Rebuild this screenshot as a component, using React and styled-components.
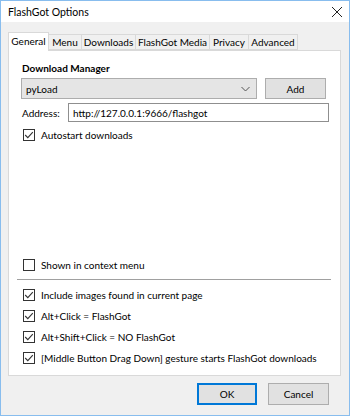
import styled, { createGlobalStyle } from 'styled-components'

const GlobalStyle = createGlobalStyle`
  html, body {
    margin: 0;
    padding: 0;
    background: #f0f0f0;
  }
  body {
    font-family: Lato, "Noto Sans", sans-serif;
    font-size: 10px;
    color: #000;
  }
`

const Window = styled.div`
  box-sizing: border-box;
  width: 350px;
  height: 416px;
  border: 1px solid #88bdee;
  background: #f0f0f0;
  display: flex;
  flex-direction: column;
`

const TitleBar = styled.div`
  height: 21px;
  background: #fff;
  display: flex;
  align-items: center;
  justify-content: space-between;
  padding: 0 6px 0 7px;
  font-size: 10.5px;
`

const Body = styled.div`
  padding: 10px 8px 0 7px;
  display: flex;
  flex-direction: column;
`

const Tabs = styled.div`
  display: flex;
  align-items: flex-end;
  height: 18px;
  position: relative;
  z-index: 1;
`

const Tab = styled.div`
  box-sizing: border-box;
  width: ${({w}) => w}px;
  height: ${({active}) => active ? '19px' : '16px'};
  margin-bottom: ${({active}) => active ? '-1px' : '0'};
  border: 1px solid #d9d9d9;
  border-bottom: ${({active}) => active ? 'none' : '1px solid #d9d9d9'};
  border-left: ${({first, active}) => (first || active) ? '1px solid #d9d9d9' : 'none'};
  background: ${({active}) => active ? '#fff' : '#f0f0f0'};
  display: flex;
  align-items: center;
  justify-content: center;
  white-space: nowrap;
  padding-bottom: ${({active}) => active ? '3px' : '0'};
`

const Panel = styled.div`
  box-sizing: border-box;
  height: 326px;
  background: #fff;
  border: 1px solid #d9d9d9;
  padding: 9px 11px 9px 12px;
  display: flex;
  flex-direction: column;
`

const Heading = styled.div`
  font-weight: bold;
  line-height: 16px;
  padding-left: 1px;
`

const Row = styled.div`
  display: flex;
  align-items: center;
  margin-top: ${({mt}) => mt || 0}px;
`

const Select = styled.div`
  box-sizing: border-box;
  width: 236px;
  height: 21px;
  background: #e5e5e5;
  border: 1px solid #adadad;
  display: flex;
  align-items: center;
  justify-content: space-between;
  padding: 0 6px 0 4px;
`

const Button = styled.div`
  box-sizing: border-box;
  width: ${({w}) => w || 61}px;
  height: ${({h}) => h || 21}px;
  background: #e1e1e1;
  border: ${({primary}) => primary ? '2px solid #0078d7' : '1px solid #adadad'};
  display: flex;
  align-items: center;
  justify-content: center;
`

const Label = styled.div`
  width: 46px;
  padding-left: 1px;
`

const Input = styled.div`
  box-sizing: border-box;
  flex: 1;
  height: 19px;
  border: 1px solid #8f8f8f;
  display: flex;
  align-items: center;
  padding-left: 4px;
`

const CheckRow = styled.label`
  display: flex;
  align-items: center;
  height: 16px;
  margin-top: ${({mt}) => mt || 0}px;
  padding-left: 2px;
  gap: 6px;
  white-space: nowrap;
`

const Box = styled.span`
  box-sizing: border-box;
  width: 12px;
  height: 12px;
  border: 1px solid #333;
  background: #fff;
  display: flex;
  align-items: center;
  justify-content: center;
`

const Spacer = styled.div`
  flex: 1;
`

const Separator = styled.div`
  height: 1px;
  background: #a0a0a0;
  margin: 6px -2px 0 -4px;
`

const Footer = styled.div`
  display: flex;
  justify-content: flex-end;
  gap: 11px;
  padding: 7px 12px 0 0;
`

const Check = ({checked, children, mt}) => (
  <CheckRow mt={mt}>
    <Box>
      {checked && (
        <svg width="10" height="10" viewBox="0 0 10 10">
          <path d="M1.2 5 L3.8 7.6 L8.8 2.2" fill="none" stroke="#333" strokeWidth="1.1" />
        </svg>
      )}
    </Box>
    {children}
  </CheckRow>
)

const tabs = [
  ['General', 41],
  ['Menu', 33],
  ['Downloads', 54],
  ['FlashGot Media', 74],
  ['Privacy', 39],
  ['Advanced', 49],
]

export default function App() {
  return (
    <Window>
      <GlobalStyle />
      <TitleBar>
        <span>FlashGot Options</span>
        <svg width="12" height="12" viewBox="0 0 12 12">
          <path d="M1 1 L11 11 M11 1 L1 11" stroke="#222" strokeWidth="1" />
        </svg>
      </TitleBar>
      <Body>
        <Tabs>
          {tabs.map(([name, w], i) => (
            <Tab key={name} w={w} active={i === 0} first={i === 0}>{name}</Tab>
          ))}
        </Tabs>
        <Panel>
          <Heading>Download Manager</Heading>
          <Row mt={2}>
            <Select>
              <span>pyLoad</span>
              <svg width="9" height="6" viewBox="0 0 9 6">
                <path d="M0.5 1 L4.5 5 L8.5 1" fill="none" stroke="#555" strokeWidth="1" />
              </svg>
            </Select>
            <Button style={{marginLeft: 8}}>Add</Button>
          </Row>
          <Row mt={4}>
            <Label>Address:</Label>
            <Input>http://127.0.0.1:9666/flashgot</Input>
          </Row>
          <Check checked mt={5}>Autostart downloads</Check>
          <Spacer />
          <Check>Shown in context menu</Check>
          <Separator />
          <Check checked mt={7}>Include images found in current page</Check>
          <Check checked mt={5}>Alt+Click = FlashGot</Check>
          <Check checked mt={5}>Alt+Shift+Click = NO FlashGot</Check>
          <Check checked mt={5}>[Middle Button Drag Down] gesture starts FlashGot downloads</Check>
        </Panel>
        <Footer>
          <Button primary w={60} h={22}>OK</Button>
          <Button w={61} h={22}>Cancel</Button>
        </Footer>
      </Body>
    </Window>
  )
}
